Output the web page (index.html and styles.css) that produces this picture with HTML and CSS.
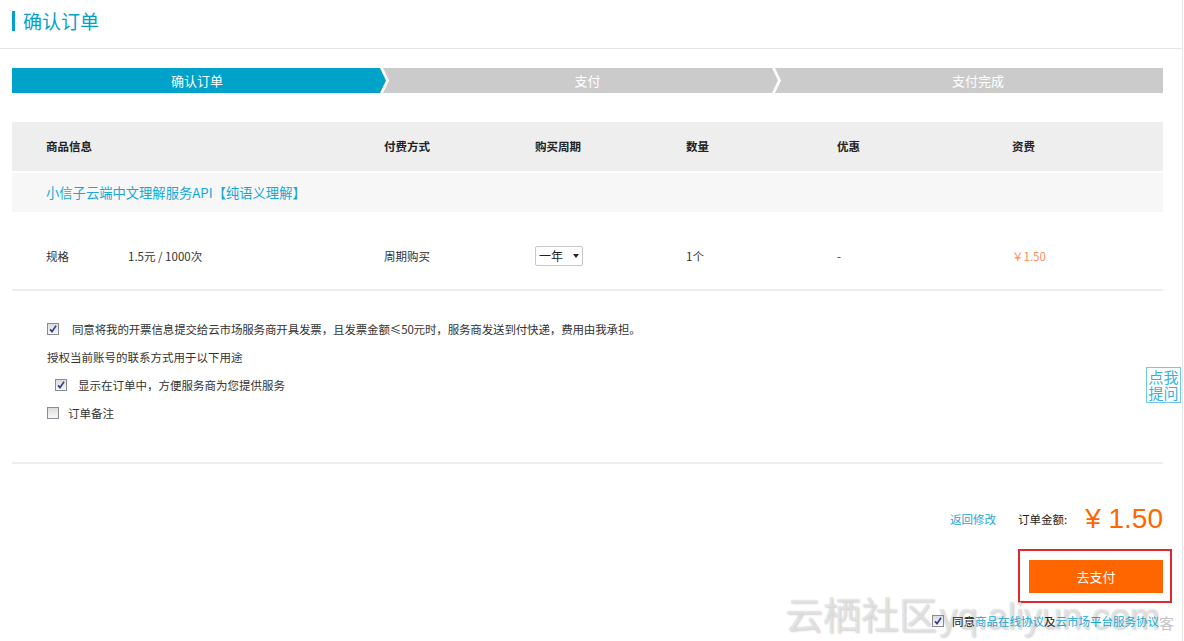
FILE: index.html
```html
<!DOCTYPE html>
<html lang="zh-CN">
<head>
<meta charset="utf-8">
<title>确认订单</title>
<link rel="stylesheet" href="styles.css">
</head>
<body>
<div class="page">
  <div class="header">
    <span class="header-bar"></span>
    <h1 class="header-title">确认订单</h1>
  </div>

  <div class="main">
    <div class="steps">
      <div class="step step-first is-active">确认订单</div>
      <div class="step step-mid">支付</div>
      <div class="step step-last">支付完成</div>
    </div>

    <div class="order-table">
      <div class="grid thead">
        <div>商品信息</div>
        <div>付费方式</div>
        <div>购买周期</div>
        <div>数量</div>
        <div>优惠</div>
        <div>资费</div>
      </div>
      <div class="pname">小信子云端中文理解服务API【纯语义理解】</div>
      <div class="grid trow">
        <div class="spec"><span class="spec-label">规格</span><span>1.5元 / 1000次</span></div>
        <div>周期购买</div>
        <div><span class="select">一年<i class="caret"></i></span></div>
        <div>1个</div>
        <div>-</div>
        <div class="price-small">￥1.50</div>
      </div>
    </div>

    <div class="opts">
      <div class="opt"><span class="cb checked"><svg viewBox="0 0 12 12" width="12" height="12"><path d="M3 6.2 L5 8.6 L9 2.8" fill="none" stroke="#283c8c" stroke-width="1.6"/></svg></span><span class="opt-text">同意将我的开票信息提交给云市场服务商开具发票，且发票金额≤50元时，服务商发送到付快递，费用由我承担。</span></div>
      <div class="opt">授权当前账号的联系方式用于以下用途</div>
      <div class="opt opt-indent"><span class="cb checked"><svg viewBox="0 0 12 12" width="12" height="12"><path d="M3 6.2 L5 8.6 L9 2.8" fill="none" stroke="#283c8c" stroke-width="1.6"/></svg></span><span class="opt-text-sm">显示在订单中，方便服务商为您提供服务</span></div>
      <div class="opt"><span class="cb"></span><span class="opt-text-xs">订单备注</span></div>
    </div>

    <div class="summary">
      <a class="link back">返回修改</a>
      <span class="total-label">订单金额:</span>
      <span class="total">¥ 1.50</span>
    </div>

    <div class="pay">
      <div class="pay-wrap">
        <button class="pay-btn">去支付</button>
        <span class="annot"></span>
      </div>
    </div>

    <div class="agree">
      <span class="wm-small">客</span>
      <span class="cb checked"><svg viewBox="0 0 12 12" width="12" height="12"><path d="M3 6.2 L5 8.6 L9 2.8" fill="none" stroke="#283c8c" stroke-width="1.6"/></svg></span>
      <span class="agree-text">同意<a class="link">商品在线协议</a>及<a class="link">云市场平台服务协议</a></span>
    </div>
  </div>

  <div class="ask">点我<br>提问</div>
  <div class="watermark"><span class="wm-cn">云栖社区</span> <span class="wm-en">yq.aliyun.com</span></div>
</div>
</body>
</html>
```

FILE: styles.css
```css
* { box-sizing: border-box; }
html, body { margin: 0; padding: 0; background: #fff; }
body {
  font-family: "Noto Sans CJK SC", "Liberation Sans", sans-serif;
  font-size: 11.5px;
  color: #333;
  overflow: hidden;
}
.page {
  position: relative;
  width: 1183px;
  height: 641px;
  border-right: 1px solid #e6e6e6;
  overflow: hidden;
}
.header {
  height: 49px;
  border-bottom: 1px solid #e5e5e5;
  display: flex;
  align-items: flex-start;
  padding: 10px 0 0 12px;
}
.header-bar {
  width: 3px;
  height: 20px;
  margin-top: 1px;
  background: #00a2ca;
}
.header-title {
  margin: 0 0 0 8px;
  font-size: 19px;
  line-height: 22px;
  font-weight: 400;
  color: #00a2ca;
}
.main {
  margin-left: 12px;
  width: 1151px;
}
.steps {
  margin-top: 19px;
  height: 25px;
  display: flex;
}
.step {
  height: 25px;
  line-height: 25px;
  color: #fff;
  font-size: 13px;
  text-align: center;
  background: #cbcbcb;
}
.step-first {
  width: 374px;
  padding-right: 4px;
  clip-path: polygon(0 0, calc(100% - 6px) 0, 100% 50%, calc(100% - 6px) 100%, 0 100%);
}
.is-active { background: #00a2ca; }
.step-mid {
  width: 395px;
  margin-left: -3px;
  padding-left: 14px;
  clip-path: polygon(0 0, calc(100% - 6px) 0, 100% 50%, calc(100% - 6px) 100%, 0 100%, 6px 50%);
}
.step-last {
  flex: 1;
  margin-left: -3px;
  padding-left: 18px;
  clip-path: polygon(0 0, 100% 0, 100% 100%, 0 100%, 6px 50%);
}
.order-table { margin-top: 29px; }
.grid {
  display: grid;
  grid-template-columns: 338px 151px 151px 151px 175px 1fr;
  padding-left: 34px;
}
.thead {
  height: 49px;
  line-height: 48px;
  background: #eee;
  font-weight: 700;
  color: #222;
}
.pname {
  margin-top: 2px;
  height: 39px;
  line-height: 39px;
  padding-left: 34px;
  background: #f7f7f7;
  font-size: 13.3px;
  color: #17a8d4;
}
.trow {
  padding-top: 34px;
  padding-bottom: 23px;
  line-height: 20px;
  border-bottom: 2px solid #eee;
}
.spec { display: flex; }
.spec-label { width: 82px; }
.select {
  display: inline-flex;
  align-items: center;
  width: 48px;
  height: 20px;
  border: 1px solid #c8c8c8;
  border-radius: 2px;
  padding-left: 3px;
  color: #222;
  line-height: 18px;
  font-size: 12px;
}
.caret {
  margin-left: 10px;
  width: 0; height: 0;
  border-left: 3.5px solid transparent;
  border-right: 3.5px solid transparent;
  border-top: 4px solid #222;
}
.price-small { color: #fb8c5c; }
.opts {
  padding-top: 24px;
  padding-bottom: 35px;
  padding-left: 35px;
  border-bottom: 2px solid #eee;
}
.opt {
  height: 28px;
  display: flex;
  align-items: center;
}
.opt-indent { padding-left: 8px; }
.cb {
  display: inline-block;
  width: 12px;
  height: 12px;
  border: 1px solid #8a8a92;
  background: linear-gradient(#dcdcdc, #f8f8f8);
  position: relative;
  flex: none;
}
.cb svg { position: absolute; left: -1px; top: -1px; }
.opt-text { margin-left: 13px; letter-spacing: -0.15px; }
.opt-text-sm { margin-left: 11px; }
.opt-text-xs { margin-left: 9px; }
.summary {
  margin-top: 35px;
  height: 40px;
  display: flex;
  align-items: center;
  justify-content: flex-end;
}
.link { color: #17a8d4; text-decoration: none; }
.back { margin-right: 22px; }
.total-label { margin-right: 18px; color: #222; }
.total {
  font-family: "Liberation Sans", sans-serif;
  font-size: 28px;
  color: #ff6600;
  line-height: 40px;
}
.pay {
  margin-top: 21px;
  display: flex;
  justify-content: flex-end;
}
.pay-wrap { position: relative; }
.pay-btn {
  display: block;
  width: 134px;
  height: 33px;
  border: 0;
  background: #ff6600;
  color: #fff;
  font-family: "Noto Sans CJK SC", sans-serif;
  font-size: 13px;
  padding: 0;
}
.annot {
  position: absolute;
  left: -11px;
  top: -11px;
  right: -9px;
  bottom: -10px;
  border: 2px solid #df2730;
}
.agree {
  position: relative;
  z-index: 2;
  margin-top: 18px;
  height: 20px;
  display: flex;
  align-items: center;
  justify-content: flex-end;
  padding-right: 4px;
}
.agree .cb { margin-right: 8px; }
.agree-text { position: relative; color: #222; }
.wm-small {
  position: absolute;
  right: -11px;
  top: 1px;
  font-size: 15px;
  color: #c4c4c4;
}
.ask {
  position: absolute;
  left: 1146px;
  top: 367px;
  width: 35px;
  height: 36px;
  border: 1px solid #6dcbe8;
  color: #35b2dc;
  font-size: 15px;
  line-height: 16px;
  text-align: center;
  padding-top: 1px;
  background: #fff;
}
.watermark {
  position: absolute;
  z-index: 1;
  left: 785px;
  top: 585px;
  color: rgba(255,255,255,0.6);
  text-shadow: 0 0 1px rgba(0,0,0,0.22), 1px 1px 2px rgba(0,0,0,0.15);
  white-space: nowrap;
  pointer-events: none;
}
.wm-cn { font-size: 38px; }
.wm-en { font-family: "Liberation Sans", sans-serif; font-size: 36px; }
```
